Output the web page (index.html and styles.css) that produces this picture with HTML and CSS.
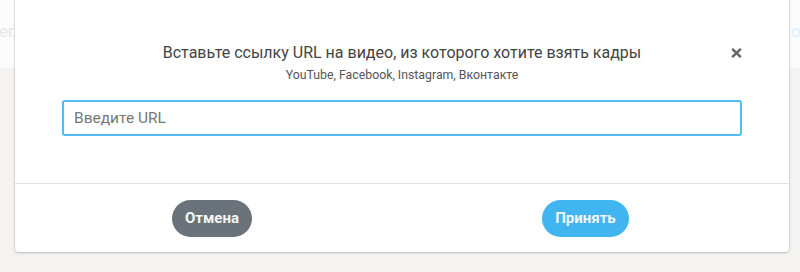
FILE: index.html
```html
<!DOCTYPE html>
<html lang="ru">
<head>
<meta charset="utf-8">
<link rel="stylesheet" href="styles.css">
</head>
<body>
<div class="page">
  <header class="site-header">
    <span class="brand">er.com</span>
    <span class="nav-link">от</span>
  </header>
  <main class="site-main"></main>
</div>

<div class="modal">
  <div class="modal-body">
    <button class="close" aria-label="Закрыть">
      <svg width="11" height="10" viewBox="0 0 11 10"><path d="M1.2 0.8 L9.8 9.2 M9.8 0.8 L1.2 9.2" stroke="#666" stroke-width="2.4" stroke-linecap="butt"/></svg>
    </button>
    <h1 class="title">Вставьте ссылку URL на видео, из которого хотите взять кадры</h1>
    <p class="subtitle">YouTube, Facebook, Instagram, Вконтакте</p>
    <input class="url-input" type="text" placeholder="Введите URL">
  </div>
  <div class="modal-footer">
    <button class="btn btn-cancel">Отмена</button>
    <button class="btn btn-ok">Принять</button>
  </div>
</div>
</body>
</html>
```

FILE: styles.css
```css
* { box-sizing: border-box; }
html, body { margin: 0; padding: 0; }
body {
  width: 800px;
  height: 272px;
  overflow: hidden;
  font-family: Roboto, "Noto Sans", sans-serif;
  background: #f4f3f2;
  position: relative;
}
.page {
  display: flex;
  flex-direction: column;
  height: 272px;
}
.site-header {
  height: 68px;
  background: #fcfcfc;
  display: flex;
  align-items: center;
  justify-content: space-between;
  padding-bottom: 6px;
}
.brand {
  margin-left: -1px;
  font-size: 17px;
  color: #e6e6e6;
}
.nav-link {
  margin-right: -9px;
  font-size: 17px;
  color: #dbeefb;
}
.site-main {
  flex: 1;
  background: #f4f3f2;
}

.modal {
  position: absolute;
  left: 15px;
  top: -4px;
  width: 774px;
  height: 256px;
  background: #fff;
  border-radius: 0 0 4px 4px;
  box-shadow: 0 0 0 1px rgba(0,0,0,0.06), 0 1px 3px rgba(0,0,0,0.18);
  display: flex;
  flex-direction: column;
}
.modal-body {
  position: relative;
  padding: 47px 47px 47px;
  display: flex;
  flex-direction: column;
  align-items: center;
  border-bottom: 1px solid #e2e2e2;
}
.close {
  position: absolute;
  top: 52px;
  right: 47px;
  width: 11px;
  height: 10px;
  padding: 0;
  border: 0;
  background: none;
  display: flex;
}
.title {
  margin: 0;
  font-size: 16px;
  line-height: 19px;
  font-weight: 400;
  color: #444;
}
.subtitle {
  margin: 6px 0 0;
  font-size: 12.3px;
  line-height: 15px;
  color: #555;
}
.url-input {
  margin-top: 17px;
  width: 100%;
  height: 36px;
  border: 2px solid #52bbf2;
  border-radius: 3px;
  padding: 0 10px;
  font-family: Roboto, "Noto Sans", sans-serif;
  font-size: 15.5px;
  color: #444;
  outline: none;
}
.url-input::placeholder { color: #777; }
.modal-footer {
  flex: 1;
  display: flex;
  align-items: center;
  justify-content: space-around;
  padding: 0 15px 0 12px;
}
.btn {
  height: 37px;
  border: 0;
  border-radius: 19px;
  padding: 0 12px;
  font-family: Roboto, "Noto Sans", sans-serif;
  font-size: 15px;
  font-weight: 700;
  color: #f4f6f8;
}
.btn-cancel { background: #6b737a; min-width: 80px; }
.btn-ok { background: #41b5f0; min-width: 87px; }
```
